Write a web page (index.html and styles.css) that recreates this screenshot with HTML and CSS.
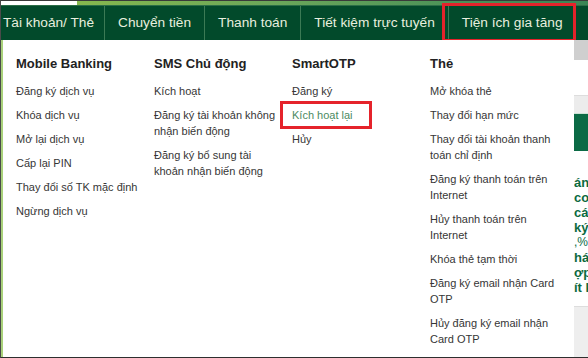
FILE: index.html
```html
<!DOCTYPE html>
<html lang="vi">
<head>
  <meta charset="UTF-8">
  <meta name="viewport" content="width=device-width, initial-scale=1.0">
  <title>Tiện ích gia tăng</title>
  <link rel="stylesheet" href="styles.css">
</head>
<body>
  <div class="frame">
    <div class="top-strip">
      <div class="strip-white"></div>
      <div class="strip-green"></div>
    </div>

    <nav class="main-nav">
      <a class="nav-item first">Tài khoản/ Thẻ</a>
      <a class="nav-item">Chuyển tiền</a>
      <a class="nav-item">Thanh toán</a>
      <a class="nav-item">Tiết kiệm trực tuyến</a>
      <a class="nav-item active">Tiện ích gia tăng</a>
      <span class="nav-rest"></span>
    </nav>

    <div class="page">
      <div class="page-main"></div>
      <div class="page-side">
        <div class="side-gray"></div>
        <div class="side-gap"></div>
        <div class="side-line"></div>
        <div class="side-bar"></div>
        <div class="side-text">
          <p>án</p>
          <p>co</p>
          <p>cá</p>
          <p>ký</p>
          <p class="thin">,%</p>
          <p>há</p>
          <p>ợp</p>
          <p>ít k</p>
        </div>
        <div class="side-foot"></div>
      </div>

      <div class="dropdown">
        <div class="menu-col">
          <h3>Mobile Banking</h3>
          <a>Đăng ký dịch vụ</a>
          <a>Khóa dịch vụ</a>
          <a>Mở lại dịch vụ</a>
          <a>Cấp lại PIN</a>
          <a>Thay đổi số TK mặc định</a>
          <a>Ngừng dịch vụ</a>
        </div>
        <div class="menu-col">
          <h3>SMS Chủ động</h3>
          <a>Kích hoạt</a>
          <a>Đăng ký tài khoản không nhận biến động</a>
          <a>Đăng ký bổ sung tài khoản nhận biến động</a>
        </div>
        <div class="menu-col">
          <h3>SmartOTP</h3>
          <a>Đăng ký</a>
          <a class="marked">Kích hoạt lại</a>
          <a>Hủy</a>
        </div>
        <div class="menu-col">
          <h3>Thẻ</h3>
          <a>Mở khóa thẻ</a>
          <a>Thay đổi hạn mức</a>
          <a>Thay đổi tài khoản thanh toán chỉ định</a>
          <a>Đăng ký thanh toán trên Internet</a>
          <a>Hủy thanh toán trên Internet</a>
          <a>Khóa thẻ tạm thời</a>
          <a>Đăng ký email nhận Card OTP</a>
          <a>Hủy đăng ký email nhận Card OTP</a>
        </div>
      </div>
    </div>
  </div>
</body>
</html>
```

FILE: styles.css
```css
html, body {
  margin: 0;
  padding: 0;
}

body {
  width: 588px;
  height: 358px;
  overflow: hidden;
  background: #ffffff;
  font-family: 'Liberation Sans', Arial, sans-serif;
}

.frame {
  height: 356px;
  border-top: 1px solid #3a3a3a;
  border-left: 1px solid #4a4a4a;
  border-bottom: 2px solid #2e2e2e;
  display: flex;
  flex-direction: column;
}

.top-strip {
  height: 4px;
  display: flex;
}

.strip-white {
  width: 76px;
  background: #ffffff;
}

.strip-green {
  flex: 1;
  background: linear-gradient(to right, #86b84e, #6aa65a 40%, #4b9258 75%, #3a8656);
}

.main-nav {
  height: 34px;
  display: flex;
  background: #024a2b;
  border-top: 1px solid #2c6e47;
}

.nav-item {
  position: relative;
  display: flex;
  align-items: center;
  padding: 0 13px 1px;
  font-size: 13.7px;
  color: #e8efdf;
  border-right: 1px solid #3c7a55;
  white-space: nowrap;
}

.nav-item.first {
  width: 91px;
  padding-left: 2px;
  padding-right: 10px;
}

.nav-item.active {
  border-right: none;
}

.nav-item.active::after {
  content: "";
  position: absolute;
  top: -3px;
  bottom: -2px;
  left: -7px;
  right: 0;
  border: 3px solid #e5232b;
}

.nav-rest {
  flex: 1;
}

.page {
  position: relative;
  flex: 1;
  display: flex;
}

.page-main {
  flex: 1;
}

.page-side {
  width: 14px;
  display: flex;
  flex-direction: column;
  border-left: 1px solid #b9d98f;
}

.side-gray {
  height: 20px;
  background: #cfcfcf;
}

.side-gap {
  height: 35px;
}

.side-line {
  height: 17px;
  background: #ececec;
  border-top: 1px solid #dddddd;
}

.side-bar {
  height: 37px;
  background: #0b6a45;
  border-top: 1px solid #cde2d5;
}

.side-text {
  padding-top: 24px;
  height: 131px;
  overflow: hidden;
}

.side-text p {
  margin: 0;
  font-size: 13px;
  line-height: 15px;
  font-weight: bold;
  color: #0c6a3f;
  white-space: nowrap;
}

.side-text p.thin {
  font-weight: normal;
  font-size: 12px;
}

.side-foot {
  flex: 1;
  background: #eeeeee;
  border-top: 1px solid #dddddd;
}

.dropdown {
  position: absolute;
  top: 0;
  left: 0;
  bottom: 0;
  width: 558px;
  padding: 16px 0 0 13px;
  display: flex;
  background: #ffffff;
  border-left: 2px solid #a9d17b;
}

.menu-col {
  width: 128px;
  padding-right: 10px;
  display: flex;
  flex-direction: column;
}

.menu-col h3 {
  margin: 0 0 11px;
  font-size: 13px;
  line-height: 16px;
  font-weight: bold;
  color: #222222;
}

.menu-col a {
  position: relative;
  margin-bottom: 8px;
  font-size: 11px;
  line-height: 16px;
  color: #363636;
}

.menu-col a.marked {
  color: #4b8a62;
}

.menu-col a.marked::after {
  content: "";
  position: absolute;
  top: -6px;
  bottom: -6px;
  left: -12px;
  width: 86px;
  border: 3px solid #e5232b;
}
```
